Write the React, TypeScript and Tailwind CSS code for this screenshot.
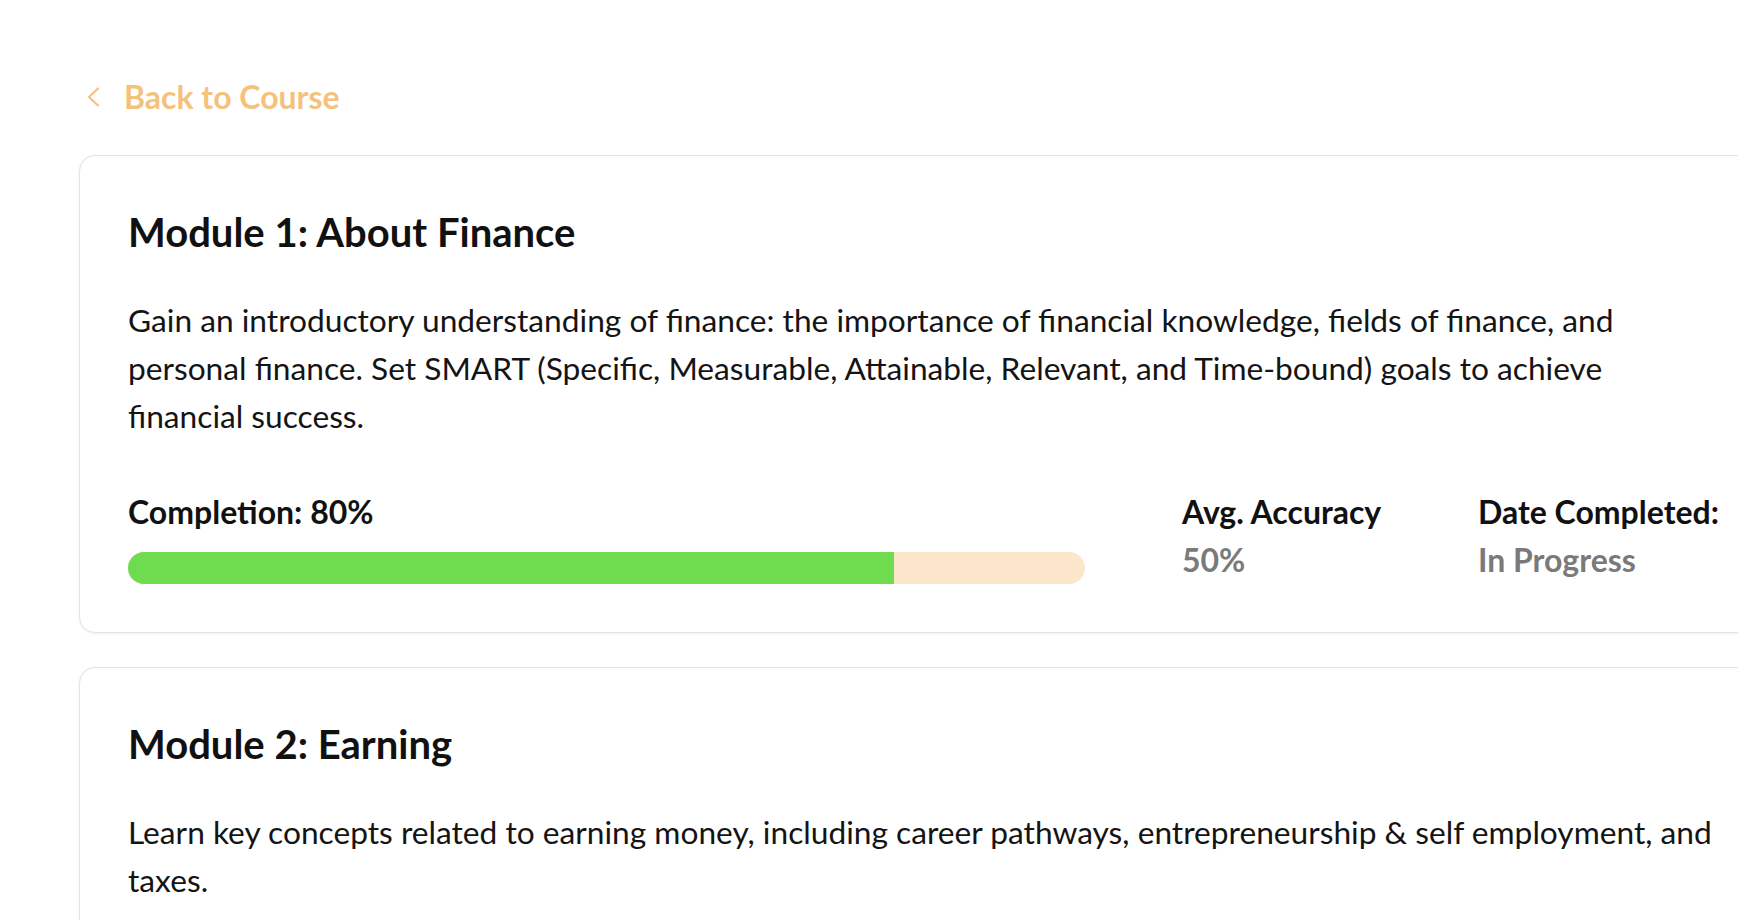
import React from "react";

type Module = {
  title: string;
  description: string;
  completion?: number;
  accuracy?: string;
  date?: string;
};

const modules: Module[] = [
  {
    title: "Module 1: About Finance",
    description:
      "Gain an introductory understanding of finance: the importance of financial knowledge, fields of finance, and personal finance. Set SMART (Specific, Measurable, Attainable, Relevant, and Time-bound) goals to achieve financial success.",
    completion: 80,
    accuracy: "50%",
    date: "In Progress",
  },
  {
    title: "Module 2: Earning",
    description:
      "Learn key concepts related to earning money, including career pathways, entrepreneurship & self employment, and taxes.",
    completion: 40,
    accuracy: "50%",
    date: "In Progress",
  },
];

function ModuleCard({ m }: { m: Module }) {
  return (
    <div className="w-[1688px] flex-none rounded-2xl border border-[#e3e3e3] bg-white px-12 pt-[52px] pb-12 shadow-[0_1px_3px_rgba(0,0,0,0.06)]">
      <h2 className="text-[40px] leading-[48px] font-bold text-[#111111]">{m.title}</h2>
      <p className="mt-10 text-[31.7px] leading-[48px] font-normal text-[#141414]">{m.description}</p>
      {m.completion !== undefined && (
        <div className="mt-12 flex">
          <div className="w-[957px] flex-none">
            <div className="text-[32px] leading-[48px] font-bold text-[#111111]">
              Completion: {m.completion}%
            </div>
            <div className="mt-4 h-8 w-full overflow-hidden rounded-full bg-[#fbe6cc]">
              <div className="h-full bg-[#6fdc50]" style={{ width: `${m.completion}%` }} />
            </div>
          </div>
          <div className="ml-[97px] w-[296px] flex-none">
            <div className="text-[32px] leading-[48px] font-bold text-[#111111]">Avg. Accuracy</div>
            <div className="text-[32px] leading-[48px] font-bold text-[#7a7a7a]">{m.accuracy}</div>
          </div>
          <div className="flex-none">
            <div className="text-[32px] leading-[48px] font-bold text-[#111111]">Date Completed:</div>
            <div className="text-[32px] leading-[48px] font-bold text-[#7a7a7a]">{m.date}</div>
          </div>
        </div>
      )}
    </div>
  );
}

export default function App() {
  return (
    <div
      className="h-[920px] w-[1738px] overflow-hidden bg-white"
      style={{ fontFamily: "Lato, 'Noto Sans', 'Liberation Sans', sans-serif" }}
    >
      <div className="flex items-center pl-[86px] pt-[78px]">
        <svg width="14" height="22" viewBox="0 0 14 22" fill="none" className="flex-none">
          <polyline
            points="12,2.5 3,11 12,19.5"
            stroke="#f5c27e"
            strokeWidth="2.2"
            strokeLinecap="round"
            strokeLinejoin="round"
          />
        </svg>
        <span className="ml-6 text-[32px] leading-[38px] font-bold text-[#f5c27e]">Back to Course</span>
      </div>
      <div className="mt-[39px] flex flex-col gap-[34px] pl-[79px]">
        {modules.map((m) => (
          <ModuleCard key={m.title} m={m} />
        ))}
      </div>
    </div>
  );
}
